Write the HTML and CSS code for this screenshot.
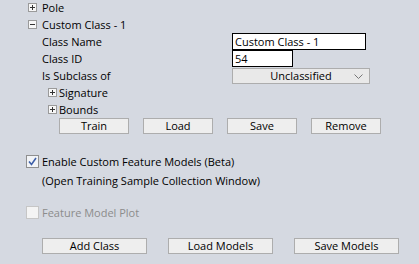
FILE: index.html
```html
<!DOCTYPE html>
<html lang="en">
<head>
    <meta charset="UTF-8">
    <title>Custom Class Settings</title>
    <link rel="stylesheet" href="styles.css">
</head>
<body>
    <div class="panel">
        <div class="tree">
            <div class="node">
                <svg class="toggle" width="9" height="9" viewBox="0 0 9 9"><rect x="0.5" y="0.5" width="8" height="8" fill="#f7f7f7" stroke="#9a9a9a"/><path d="M2 4.5h5M4.5 2v5" stroke="#333"/></svg>
                <span>Pole</span>
            </div>
            <div class="node">
                <svg class="toggle" width="9" height="9" viewBox="0 0 9 9"><rect x="0.5" y="0.5" width="8" height="8" fill="#f7f7f7" stroke="#9a9a9a"/><path d="M2 4.5h5" stroke="#333"/></svg>
                <span>Custom Class - 1</span>
            </div>
            <div class="field">
                <span class="field-label">Class Name</span>
                <input class="text-input name-input" type="text" value="Custom Class - 1">
            </div>
            <div class="field">
                <span class="field-label">Class ID</span>
                <input class="text-input id-input" type="text" value="54">
            </div>
            <div class="field">
                <span class="field-label">Is Subclass of</span>
                <div class="dropdown">
                    <span>Unclassified</span>
                    <svg class="chevron" width="9" height="5" viewBox="0 0 9 5"><path d="M0.5 0.5l4 4 4-4" fill="none" stroke="#777"/></svg>
                </div>
            </div>
            <div class="node sub">
                <svg class="toggle" width="9" height="9" viewBox="0 0 9 9"><rect x="0.5" y="0.5" width="8" height="8" fill="#f7f7f7" stroke="#9a9a9a"/><path d="M2 4.5h5M4.5 2v5" stroke="#333"/></svg>
                <span>Signature</span>
            </div>
            <div class="node sub">
                <svg class="toggle" width="9" height="9" viewBox="0 0 9 9"><rect x="0.5" y="0.5" width="8" height="8" fill="#f7f7f7" stroke="#9a9a9a"/><path d="M2 4.5h5M4.5 2v5" stroke="#333"/></svg>
                <span>Bounds</span>
            </div>
            <div class="class-buttons">
                <button class="btn small">Train</button>
                <button class="btn small">Load</button>
                <button class="btn small">Save</button>
                <button class="btn small">Remove</button>
            </div>
        </div>

        <div class="check-row">
            <svg class="check" width="13" height="13" viewBox="0 0 13 13"><rect x="0.5" y="0.5" width="12" height="12" fill="#f2f4f7" stroke="#8f8f8f"/><path d="M3 6.5l2.5 3 4.5-6.5" fill="none" stroke="#3d5fa8" stroke-width="1.6"/></svg>
            <span>Enable Custom Feature Models (Beta)</span>
        </div>
        <div class="note">(Open Training Sample Collection Window)</div>

        <div class="check-row disabled">
            <svg class="check" width="13" height="13" viewBox="0 0 13 13"><rect x="0.5" y="0.5" width="12" height="12" fill="#f4f4f4" stroke="#c6c6c6"/></svg>
            <span>Feature Model Plot</span>
        </div>

        <div class="model-buttons">
            <button class="btn wide">Add Class</button>
            <button class="btn wide">Load Models</button>
            <button class="btn wide">Save Models</button>
        </div>
    </div>
</body>
</html>
```

FILE: styles.css
```css
body {
    margin: 0;
    background-color: #d5d9e1;
    font-family: "Open Sans", "Noto Sans", sans-serif;
    font-size: 11px;
    color: #000;
}
.panel {
    padding: 0 0 0 28px;
    margin-top: -1px;
}
.node, .field {
    display: flex;
    align-items: center;
    height: 17px;
}
.toggle {
    margin-right: 5px;
    flex-shrink: 0;
}
.node.sub {
    padding-left: 20px;
}
.node.sub .toggle {
    margin-right: 2px;
}
.field-label {
    width: 190px;
    padding-left: 14px;
}
.text-input {
    box-sizing: border-box;
    height: 17px;
    border: 1px solid #000;
    background: #fff;
    padding: 0 2px;
    font: inherit;
    margin: 0;
    outline: none;
}
.name-input {
    width: 134px;
}
.id-input {
    width: 61px;
}
.dropdown {
    box-sizing: border-box;
    width: 138px;
    height: 16px;
    border: 1px solid #adadad;
    background: #e9e9e9;
    display: flex;
    align-items: center;
    justify-content: center;
    position: relative;
}
.chevron {
    position: absolute;
    right: 6px;
    top: 5px;
}
.btn {
    box-sizing: border-box;
    height: 16px;
    border: 1px solid #adadad;
    background: #eeeeee;
    font: inherit;
    color: #000;
    padding: 0;
    margin: 0;
    line-height: 14px;
}
.class-buttons {
    display: flex;
    gap: 14px;
    padding-left: 31px;
}
.btn.small {
    width: 70px;
}
.check-row {
    display: flex;
    align-items: center;
    height: 19px;
    margin-left: -2px;
    gap: 3px;
}
.tree + .check-row {
    margin-top: 18px;
}
.note {
    height: 19px;
    line-height: 19px;
    padding-left: 14px;
}
.check-row.disabled {
    margin-top: 13px;
    color: #8c8c8c;
}
.model-buttons {
    display: flex;
    gap: 21px;
    padding-left: 14px;
    margin-top: 16px;
}
.btn.wide {
    width: 105px;
}
```
